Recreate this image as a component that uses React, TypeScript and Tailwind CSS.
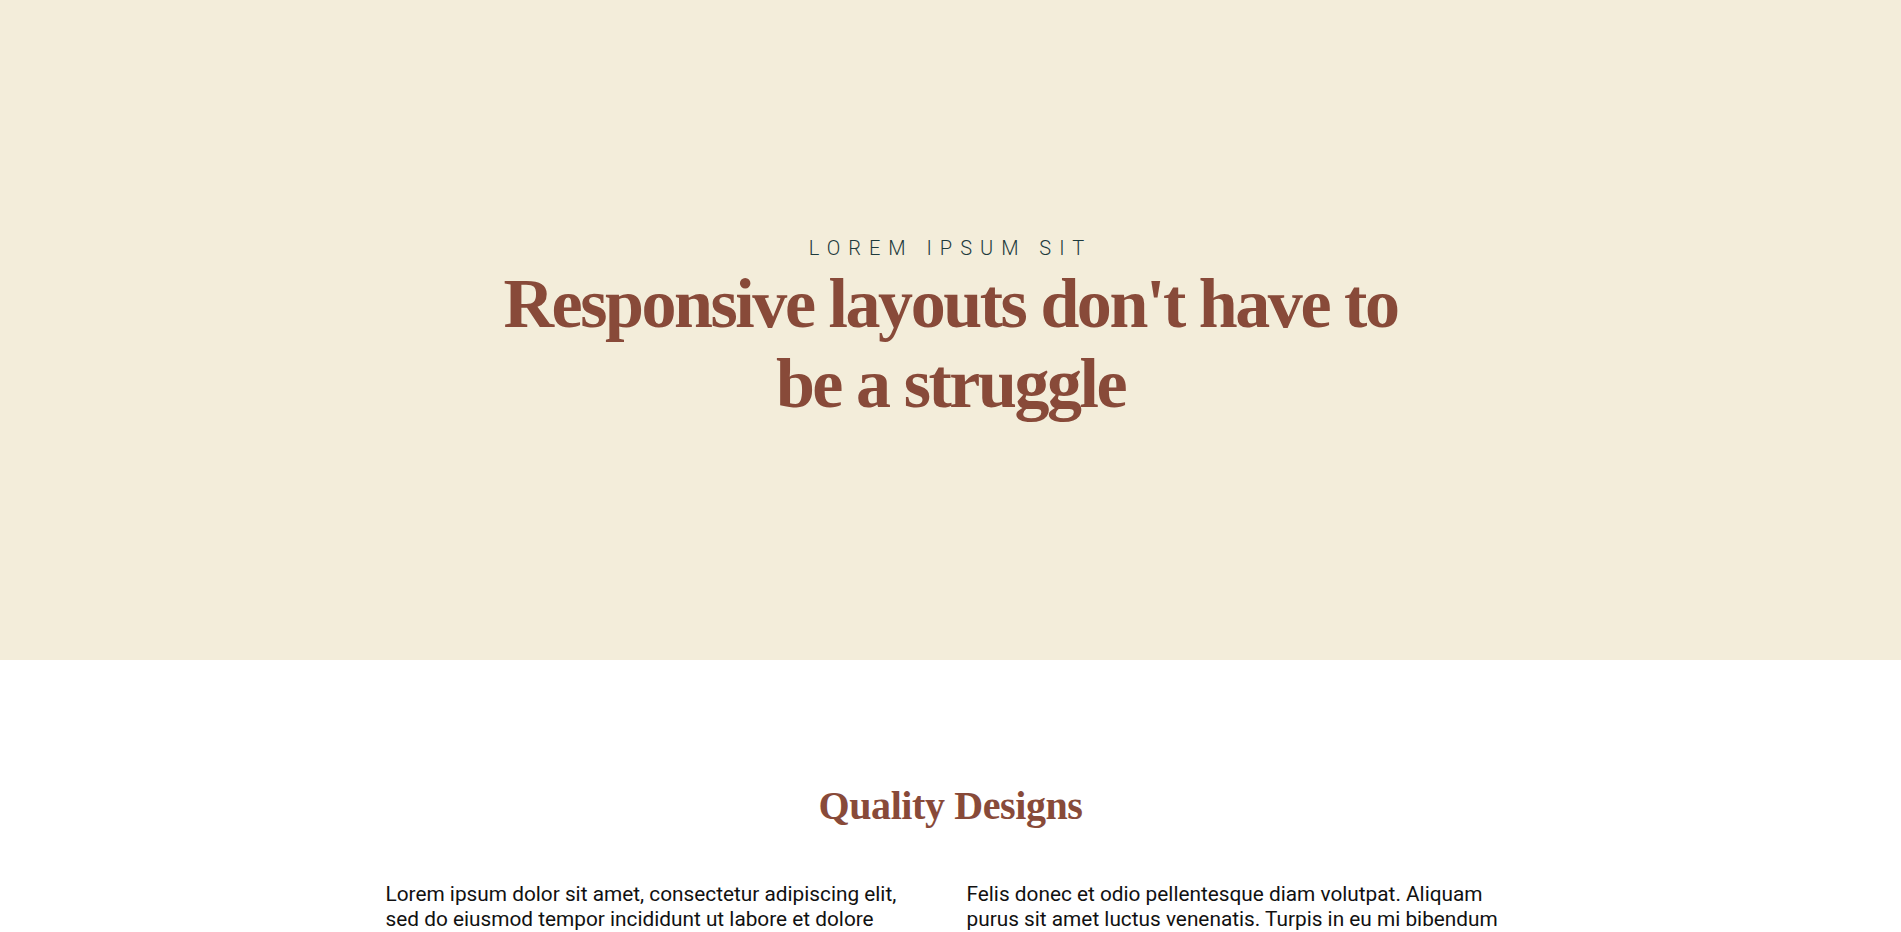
import React from 'react';

const serif = { fontFamily: '"Liberation Serif", "DejaVu Serif", serif' };

const App: React.FC = () => {
    return (
        <div className="min-h-screen bg-white" style={{ fontFamily: 'Roboto, "Liberation Sans", sans-serif' }}>
            {/* Hero */}
            <header className="h-[660px] bg-[#f3edda] flex flex-col items-center justify-center text-center px-4">
                <p className="text-[20px] leading-6 font-light uppercase tracking-[0.4em] text-[#1d3a3c] mb-1">
                    Lorem ipsum sit
                </p>
                <h1
                    className="text-[70px] leading-[80px] font-bold text-[#884a39] max-w-[960px] tracking-[-0.035em]"
                    style={serif}
                >
                    Responsive layouts don't have to be a struggle
                </h1>
            </header>

            {/* Content */}
            <section className="pt-[118px] pb-20">
                <div className="max-w-[1130px] mx-auto">
                    <h2 className="text-[40px] leading-[56px] font-bold text-[#884a39] text-center tracking-[-0.01em] mb-[48px]" style={serif}>
                        Quality Designs
                    </h2>
                    <div className="grid grid-cols-2 gap-8 text-[20.8px] leading-[25px] text-[#111]">
                        <p>
                            Lorem ipsum dolor sit amet, consectetur adipiscing elit, sed do eiusmod tempor incididunt ut labore et dolore
                            magna aliqua. Ut enim ad minim veniam, quis nostrud exercitation ullamco laboris nisi ut aliquip ex ea commodo.
                        </p>
                        <p>
                            Felis donec et odio pellentesque diam volutpat. Aliquam purus sit amet luctus venenatis. Turpis in eu mi bibendum
                            neque egestas congue quisque. Arcu dui vivamus arcu felis bibendum ut tristique et egestas.
                        </p>
                    </div>
                </div>
            </section>
        </div>
    );
};

export default App;
